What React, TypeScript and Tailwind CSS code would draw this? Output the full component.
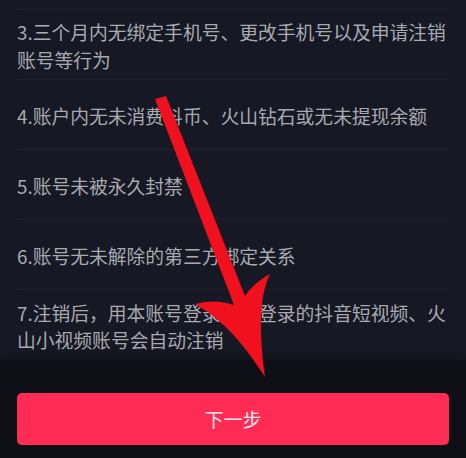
import React from "react";

const ITEMS: string[][] = [
  ["3.三个月内无绑定手机号、更改手机号以及申请注销", "账号等行为"],
  ["4.账户内无未消费抖币、火山钻石或无未提现余额"],
  ["5.账号未被永久封禁"],
  ["6.账号无未解除的第三方绑定关系"],
  ["7.注销后，用本账号登录过或登录的抖音短视频、火", "山小视频账号会自动注销"],
];

function Arrow() {
  return (
    <svg
      className="pointer-events-none absolute inset-0"
      width="466"
      height="458"
      viewBox="0 0 466 458"
    >
      <path
        d="M155 99 L166 96 L245 296 C251 287 259 280 270 274 C259 296 259 332 265 377 C246 347 224 320 195 304 C211 300 222 301 234 305 Z"
        fill="#f0101e"
      />
    </svg>
  );
}

export default function App() {
  return (
    <div
      className="relative flex h-[458px] w-[466px] flex-col overflow-hidden bg-[#161823]"
      style={{ fontFamily: '"Noto Sans CJK SC", "Noto Sans", sans-serif' }}
    >
      <div className="px-[17px]">
        <div className="h-[10px] border-b border-[#20212d]" />
        {ITEMS.map((lines, i) => (
          <div
            key={i}
            className={
              "flex h-[70px] flex-col justify-center pt-[2px] " +
              (i < ITEMS.length - 1 ? "border-b border-[#20212d]" : "")
            }
          >
            {lines.map((l) => (
              <p key={l} className="whitespace-nowrap text-[18.8px] leading-[27.5px] text-[#a9aab0]">
                {l}
              </p>
            ))}
          </div>
        ))}
      </div>

      <div className="flex flex-1 flex-col bg-[#0e0f16] px-[17px] pt-[33px] shadow-[0_-4px_10px_rgba(0,0,0,0.25)]">
        <button className="flex h-[52px] w-full items-center justify-center rounded-[5px] bg-[#fe2c55] text-[19px] text-[#fbe9ec]">
          下一步
        </button>
      </div>

      <Arrow />
    </div>
  );
}
